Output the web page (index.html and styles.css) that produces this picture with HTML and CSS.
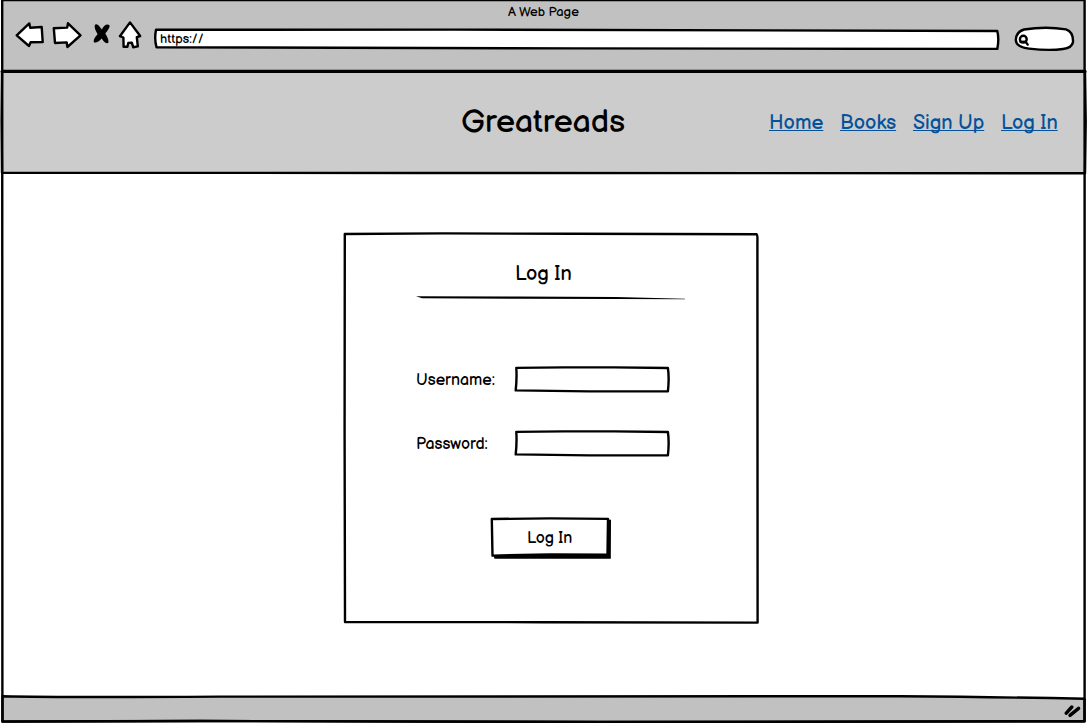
FILE: index.html
```html
<!DOCTYPE html>
<html lang="en">
<head>
<meta charset="utf-8">
<title>Greatreads - Log In</title>
<link rel="stylesheet" href="styles.css">
</head>
<body>
<div class="browser">
  <div class="chrome">
    <div class="window-title"><span>A Web Page</span></div>
    <div class="toolbar">
      <svg class="nav-icons" width="130" height="32" viewBox="14 20 130 32">
        <path d="M16.7 35.3 L29.3 23.4 L30.2 27.7 L41.7 27 L42.7 42 L30.6 42.3 L29 46 Z"/>
        <path d="M53.8 28.2 L67.2 27.6 L68 23.3 L80.5 35.4 L67.4 47 L66.7 42.4 L55 43 Z"/>
        <path class="solid" d="M94.8 25 Q97 22.5 101.8 29.5 Q105.5 22.8 109.5 25.3 Q110.5 27 105.3 33.6 Q108.8 39 108.4 42.8 Q105.5 44.5 101.7 38.5 Q97 43.8 93.8 42.2 Q93 39 97.6 34.2 Q94 28.5 94.8 25 Z"/>
        <path d="M130 22.4 L140.2 36 L136.8 37.2 L137.8 46.4 L133.2 47.2 L131.8 42.7 L128.3 42.9 L127.4 46.8 L123.6 46.8 L123.4 37.5 L119.9 36.2 Z"/>
      </svg>
      <div class="address">
        <svg class="sketch" viewBox="0 0 846 22"><path class="fill-white" d="M2 1.8 L300 1.6 L843.3 3 Q845.3 11 843.3 21 L420 20.4 L2.5 19.3 Q.2 11 2 1.8 Z"/></svg>
        <span class="url">https://</span>
      </div>
      <svg class="search" width="62" height="28" viewBox="1014 25 62 28">
        <path d="M1024 29.5 Q1046 26 1066 29.4 Q1073.5 32 1073 42 Q1072 48 1063 49 Q1049 51 1029 48.6 Q1016 47 1015.8 40 Q1016 32 1024 29.5 Z"/>
        <circle cx="1023.3" cy="39.2" r="3.4"/><path d="M1020.5 42 L1025.5 41.6 L1027.7 44.6"/>
      </svg>
    </div>
  </div>

  <header class="site-header">
    <svg class="sketch" viewBox="0 0 1088 103"><path class="thick" d="M2.2 .4 L1085 .4"/><path d="M2 0 L1.6 50 L2 101.8 L420 102 L1085 102.2 L1085.7 50 L1085 1"/></svg>
    <h1 class="brand">Greatreads</h1>
    <nav class="links">
      <a class="l-home" href="#">Home</a><a class="l-books" href="#">Books</a><a class="l-sign" href="#">Sign Up</a><a class="l-log" href="#">Log In</a>
    </nav>
  </header>

  <main class="page">
    <form class="card">
      <svg class="sketch" viewBox="0 0 416 392"><path d="M1.8 2 L100 1.4 L230 1.8 L413.5 2.2 Q414.8 2.4 414.4 10 L414.6 390.6 L200 390.2 L2 390 L1.6 200 Z"/></svg>
      <h2 class="card-title">Log In</h2>
      <svg class="rule" width="270" height="5" viewBox="0 0 270 5"><path class="solid" d="M0 .2 L100 .5 L200 .9 L269 2.7 L269 3.3 L200 3 L100 2.7 L6 2.3 Z"/></svg>
      <div class="fields">
        <label class="field"><span class="label">Username:</span>
          <span class="box"><svg class="sketch" viewBox="0 0 156 27"><path d="M2.3 1.9 L50 1.4 L100 1.4 L153.9 2 Q155.4 12 153.9 25.3 L75 25.4 L1.7 24.4 Q3 12 2.3 1.9 Z"/></svg><input type="text" aria-label="Username"></span></label>
        <label class="field"><span class="label">Password:</span>
          <span class="box"><svg class="sketch" viewBox="0 0 156 27"><path d="M2.3 1.9 L50 1.4 L100 1.4 L153.9 2 Q155.4 12 153.9 25.3 L75 25.4 L1.7 24.4 Q3 12 2.3 1.9 Z"/></svg><input type="password" aria-label="Password"></span></label>
      </div>
      <button class="submit" type="button">
        <svg class="sketch" viewBox="0 0 121 42"><path class="solid" d="M3 37 L116 37 L117 2.6 L121 2.8 L120.8 41.8 L4.5 41.8 Z"/><path class="fill-white" d="M1.8 2 L60 1.4 L118 1.9 L117.5 37.6 L60 37.4 L2.5 38.6 Z"/></svg>
        <span>Log In</span>
      </button>
    </form>
  </main>

  <footer class="status">
    <svg class="sketch" viewBox="0 0 1088 28"><path class="fill-gray" d="M2.5 1.2 Q60 2.6 220 1.6 L900 1.2 Q1000 2 1084.5 3.8 L1084.5 26 L600 27 L200 26 L2.5 26.6 Z"/></svg>
    <svg class="grip" width="18" height="14" viewBox="0 0 18 14"><path d="M2.3 9.2 L7.8 3"/><path d="M6 11.4 L14.6 4.4"/></svg>
  </footer>
  <svg class="window-frame" viewBox="0 0 1088 723"><path d="M2.2 .1 H1084.6 V721.5 L600 722 L200 721 L2.4 721.5 Z"/></svg>
</div>
</body>
</html>
```
FILE: styles.css
```css
* { box-sizing: border-box; }
body {
  margin: 0;
  background: #fff;
  color: #000;
  font-family: "Balsamiq Sans", Inter, "Open Sans", sans-serif;
  font-feature-settings: "cv08" 1, "cv11" 1;
  overflow: hidden;
}
svg {
  display: block;
  fill: none;
  stroke: #000;
  stroke-width: 2.4;
  stroke-linejoin: round;
  stroke-linecap: round;
}
span { white-space: nowrap; }
.solid { fill: #000; stroke: none; }
.fill-white { fill: #fff; }
.fill-gray { fill: #c1c1c1; }
.thick { stroke-width: 3.2; }
.browser {
  position: relative;
  width: 1088px;
  height: 723px;
  display: grid;
  grid-template-rows: 71px 102px 522px 28px;
}
.sketch { position: absolute; inset: 0; width: 100%; height: 100%; }
.site-header .sketch { height: 103px; overflow: visible; }
.window-frame { position: absolute; inset: 0; pointer-events: none; }

.chrome { background: #c1c1c1; margin: 0 3px 0 2px; }
.window-title { height: 20px; padding: 4px 0 0 506px; font-size: 13px; line-height: 16px; }
.toolbar { display: flex; padding-left: 12px; }
.nav-icons { flex: none; }
.nav-icons path, .search path:first-child, .search circle { fill: #fff; }
.nav-icons .solid { fill: #000; }
.address {
  position: relative;
  width: 846px;
  height: 22px;
  margin: 8px 0 0 10px;
  padding: 3px 0 0 6px;
  font-size: 13px;
  line-height: 16px;
}
.url { position: relative; }
.search { margin: 5px 0 0 14px; }

.site-header {
  position: relative;
  display: grid;
  grid-template-columns: 461px 308px 1fr;
  background: linear-gradient(#ccc, #ccc) 2px 0 / 1083px 100% no-repeat;
}
.brand { grid-column: 2; margin: 33px 0 0; font-size: 32px; line-height: 38px; font-weight: 400; }
.links { display: flex; align-items: flex-start; padding-top: 39px; font-size: 20px; line-height: 26px; }
.links a { position: relative; color: #04529b; white-space: nowrap; text-underline-offset: 1px; text-decoration-thickness: 1px; text-decoration-skip-ink: none; }
.l-home { width: 71px; }
.l-books { width: 73px; }
.l-sign { width: 88px; }

.page { padding: 59px 0 0 343px; }
.card { position: relative; width: 416px; height: 392px; }
.card-title { margin: 0; padding: 29px 0 0 172px; font-size: 20px; line-height: 26px; font-weight: 400; }
.rule { margin: 9px 0 0 73px; }
.fields { display: grid; gap: 37px; padding: 65px 0 0 73px; }
.field { display: grid; grid-template-columns: 98px 156px; align-items: center; height: 27px; font-size: 16px; }
.label { padding-top: 2px; }
.box { position: relative; height: 27px; }
.box input { position: relative; width: 148px; height: 19px; margin: 4px; padding: 0; border: 0; outline: 0; background: transparent; }
.submit {
  position: relative;
  display: block;
  width: 121px;
  height: 42px;
  margin: 60px 0 0 147px;
  padding: 2px 0 0 37px;
  border: 0;
  background: none;
  text-align: left;
  font: 16px/20px "Balsamiq Sans", Inter, "Open Sans", sans-serif;
  font-feature-settings: inherit;
  color: #000;
}
.submit span { position: relative; }

.status { position: relative; display: flex; justify-content: flex-end; padding: 9px 6px 0 0; }
.grip { position: relative; stroke-width: 3.4; }
```
